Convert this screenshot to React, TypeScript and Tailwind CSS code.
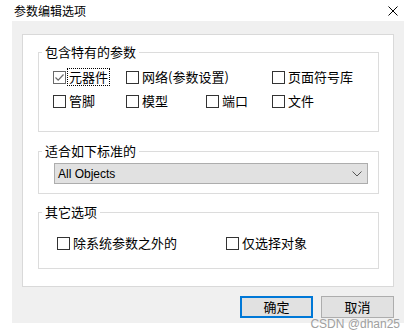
import { ReactNode } from "react";

const FONT = '"Noto Sans CJK SC", "Noto Sans", "Liberation Sans", sans-serif';

function CheckBox({ label, checked, focused, className }: { label: string; checked?: boolean; focused?: boolean; className?: string }) {
  return (
    <div className={`flex items-center h-[24px] ${className ?? ""}`}>
      <span
        className={`w-[13px] h-[13px] shrink-0 border bg-white flex items-center justify-center ${
          checked ? "border-[#6a6a6a]" : "border-[#333333]"
        }`}
      >
        {checked && (
          <svg width="11" height="11" viewBox="0 0 11 11">
            <path d="M1.5 5.5 L4.2 8.2 L9.5 2.5" fill="none" stroke="#6a6a6a" strokeWidth="1.2" />
          </svg>
        )}
      </span>
      <span
        className={`ml-[2px] text-[13px] leading-[16px] px-[1px] ${
          focused ? "outline outline-1 outline-dotted outline-black" : ""
        }`}
      >
        {label}
      </span>
    </div>
  );
}

function Group({ title, height, children }: { title: string; height: string; children: ReactNode }) {
  return (
    <fieldset className={`w-[341px] ${height} border border-[#dcdcdc]`}>
      <legend className="ml-[3px] px-[3px] text-[13px] leading-[18px] text-black">{title}</legend>
      {children}
    </fieldset>
  );
}

export default function App() {
  return (
    <div className="relative w-[415px] h-[334px] bg-white overflow-hidden text-black" style={{ fontFamily: FONT }}>
      <div className="h-[21px] flex items-center justify-between pl-[14px] pr-[17px]">
        <span className="text-[12px] leading-[16px]">参数编辑选项</span>
        <svg width="10" height="10" viewBox="0 0 10 10">
          <path d="M0.5 0.5 L9.5 9.5 M9.5 0.5 L0.5 9.5" stroke="#000" strokeWidth="1" />
        </svg>
      </div>

      <div className="ml-[12px] w-[392px] h-[302px] bg-[#f0f0f0] pt-[13px] pl-[10px]">
        <div className="w-[372px] h-[253px] border border-[#d9d9d9] bg-white pt-[8px] px-[15px]">
          <Group title="包含特有的参数" height="h-[89px]">
            <div className="pt-[4px] pl-[14px]">
              <div className="flex">
                <CheckBox label="元器件" checked focused className="w-[73px]" />
                <CheckBox label="网络(参数设置)" className="w-[146px]" />
                <CheckBox label="页面符号库" />
              </div>
              <div className="flex">
                <CheckBox label="管脚" className="w-[73px]" />
                <CheckBox label="模型" className="w-[80px]" />
                <CheckBox label="端口" className="w-[66px]" />
                <CheckBox label="文件" />
              </div>
            </div>
          </Group>

          <div className="mt-[10px]">
            <Group title="适合如下标准的" height="h-[52px]">
              <div className="pt-[3px] pl-[15px]">
                <div className="w-[314px] h-[21px] bg-[#e1e1e1] border border-[#adadad] flex items-center justify-between pl-[3px] pr-[5px]">
                  <span className="text-[12px] leading-[14px]" style={{ fontFamily: '"Liberation Sans", sans-serif' }}>
                    All Objects
                  </span>
                  <svg width="10" height="6" viewBox="0 0 10 6">
                    <path d="M0.5 0.5 L5 5 L9.5 0.5" fill="none" stroke="#555" strokeWidth="1" />
                  </svg>
                </div>
              </div>
            </Group>
          </div>

          <div className="mt-[9px]">
            <Group title="其它选项" height="h-[66px]">
              <div className="pt-[10px] pl-[18px] flex">
                <CheckBox label="除系统参数之外的" className="w-[169px]" />
                <CheckBox label="仅选择对象" />
              </div>
            </Group>
          </div>
        </div>

        <div className="w-[372px] mt-[9px] flex justify-end gap-[8px]">
          <button className="w-[73px] h-[22px] bg-[#e1e1e1] border-2 border-[#0078d7] text-[13px] leading-[16px]">确定</button>
          <button className="w-[73px] h-[22px] bg-[#e1e1e1] border border-[#adadad] text-[13px] leading-[16px]">取消</button>
        </div>
      </div>

      <span
        className="absolute right-[15px] bottom-[3px] text-[12px] leading-[14px] text-[#a0a0a0]"
        style={{ fontFamily: '"Liberation Sans", sans-serif' }}
      >
        CSDN @dhan25
      </span>
    </div>
  );
}
